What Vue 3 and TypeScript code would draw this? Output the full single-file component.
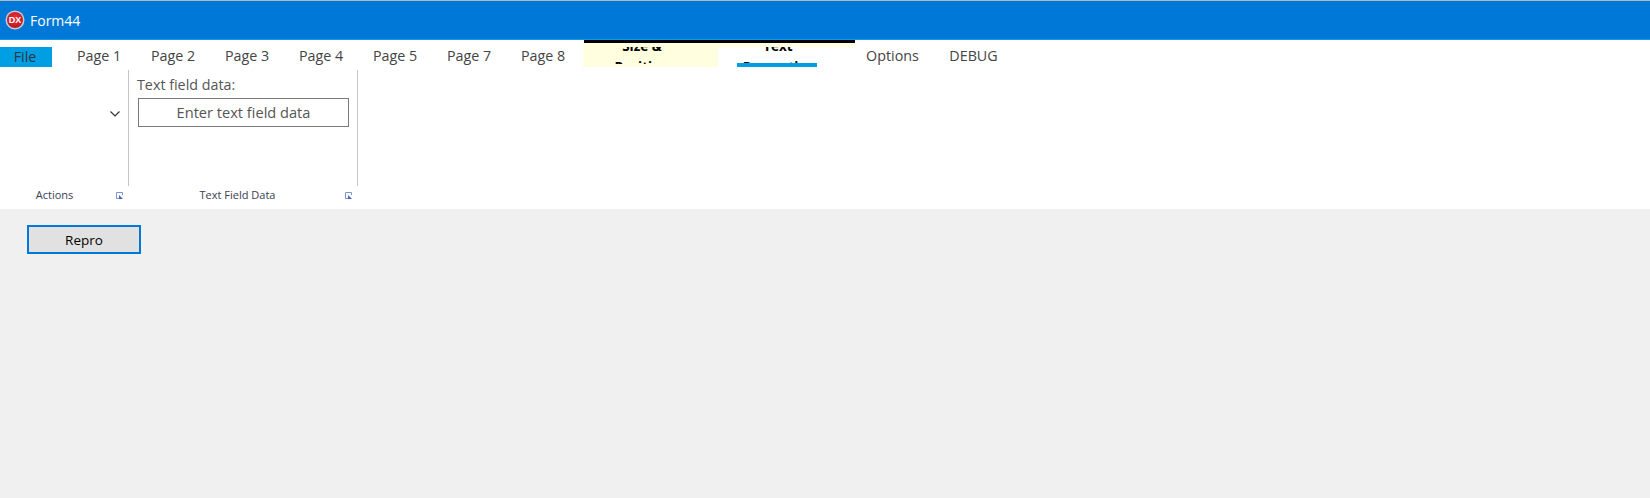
<script setup lang="ts">
const pages: string[] = ['Page 1', 'Page 2', 'Page 3', 'Page 4', 'Page 5', 'Page 7', 'Page 8']
</script>

<template>
  <div class="form">
    <header class="titlebar">
      <svg class="logo" width="20" height="20" viewBox="0 0 20 20">
        <defs>
          <radialGradient id="ball" cx="50%" cy="40%" r="60%">
            <stop offset="0%" stop-color="#f0323c" />
            <stop offset="100%" stop-color="#b81822" />
          </radialGradient>
        </defs>
        <circle cx="10" cy="10" r="9.5" fill="#c9cdd2" />
        <circle cx="10" cy="10" r="8" fill="url(#ball)" />
        <text x="10" y="13" text-anchor="middle" class="logo-text">DX</text>
      </svg>
      <span class="title">Form44</span>
    </header>

    <nav class="tabs">
      <div class="tab-file">File</div>
      <div v-for="page in pages" :key="page" class="tab">{{ page }}</div>
      <div class="context">
        <div class="ctx-tab ctx-size">
          <div class="ctx-label">Size &amp;<br />Position</div>
        </div>
        <div class="ctx-tab ctx-text">
          <div class="ctx-label">Text<br />Properties</div>
          <div class="active-bar"></div>
        </div>
      </div>
      <div class="tab tab-options">Options</div>
      <div class="tab tab-debug">DEBUG</div>
    </nav>

    <section class="ribbon">
      <div class="group group-actions">
        <div class="group-body">
          <svg class="chevron" width="10" height="6" viewBox="0 0 10 6">
            <path d="M0.5 0.5 L5 5 L9.5 0.5" fill="none" stroke="#333" stroke-width="1.2" />
          </svg>
        </div>
        <div class="caption">
          <span>Actions</span>
          <svg class="launcher" width="7" height="7" viewBox="0 0 7 7">
            <path d="M6.5 3 V0.5 H0.5 V6.5 H3" fill="none" stroke="#7d95cf" stroke-width="1" />
            <path d="M3 3 L7 7 H3 Z" fill="#3f66c4" />
          </svg>
        </div>
      </div>
      <div class="group group-text">
        <div class="group-body">
          <label class="field-label">Text field data:</label>
          <div class="field">Enter text field data</div>
        </div>
        <div class="caption">
          <span>Text Field Data</span>
          <svg class="launcher" width="7" height="7" viewBox="0 0 7 7">
            <path d="M6.5 3 V0.5 H0.5 V6.5 H3" fill="none" stroke="#7d95cf" stroke-width="1" />
            <path d="M3 3 L7 7 H3 Z" fill="#3f66c4" />
          </svg>
        </div>
      </div>
    </section>

    <main class="content">
      <button class="repro">Repro</button>
    </main>
  </div>
</template>

<style>
html, body {
  margin: 0;
  background: #f0f0f0;
}
</style>

<style scoped>
.form {
  width: 1650px;
  height: 498px;
  display: flex;
  flex-direction: column;
  overflow: hidden;
  font-family: "Open Sans", "Noto Sans", sans-serif;
  background: #f0f0f0;
}

.titlebar {
  height: 39px;
  box-sizing: border-box;
  border-top: 1px solid #b4b9bf;
  background: #0078d7;
  color: #fff;
  display: flex;
  align-items: center;
  padding-left: 5px;
  gap: 5px;
}

.logo {
  flex: none;
}

.logo-text {
  font-family: "Liberation Sans", sans-serif;
  font-size: 9px;
  font-weight: 700;
  fill: #fff;
}

.title {
  font-size: 14px;
}

.tabs {
  height: 28px;
  background: #fff;
  display: flex;
  font-size: 14.3px;
  color: #444;
  border-top: 1px solid #0f9be6;
  box-sizing: border-box;
}

.tab-file {
  width: 50px;
  height: 20px;
  margin-top: 7px;
  margin-right: 10px;
  padding-right: 2px;
  background: #009fe3;
  color: #2a3540;
  text-align: center;
  line-height: 20px;
}

.tab {
  width: 74px;
  text-align: center;
  line-height: 31px;
}

.context {
  margin-left: 4px;
  display: flex;
  width: 271px;
  border-top: 3px solid #000;
  height: 24px;
}

.ctx-tab {
  position: relative;
  height: 24px;
  font-weight: 700;
  color: #000;
  text-align: center;
}

.ctx-size {
  width: 135px;
  margin-left: -1px;
  background: #ffffe0;
}

.ctx-text {
  width: 137px;
  background: linear-gradient(#ffffe0 4px, #fff 4px);
}

.ctx-label {
  position: absolute;
  left: 0;
  right: 17px;
  top: 4px;
  height: 20px;
  overflow: hidden;
  clip-path: inset(0 0 3px 0);
  display: flex;
  flex-direction: column;
  justify-content: center;
  font-size: 13.5px;
  line-height: 21px;
  box-sizing: border-box;
}

.active-bar {
  position: absolute;
  left: 19px;
  width: 80px;
  top: 20px;
  height: 4px;
  background: #009fe3;
}

.tab-options {
  width: 75px;
}

.tab-debug {
  width: 87px;
}

.ribbon {
  height: 142px;
  background: #fff;
  display: flex;
  color: #555;
}

.group {
  display: flex;
  flex-direction: column;
}

.group-actions {
  width: 129px;
}

.group-text {
  width: 229px;
}

.group-body {
  box-sizing: border-box;
  height: 116px;
  margin-top: 3px;
  border-right: 1px solid #c6c6c6;
  position: relative;
  padding-left: 8px;
}

.chevron {
  position: absolute;
  left: 110px;
  top: 41px;
}

.field-label {
  display: block;
  font-size: 14.3px;
  line-height: 19px;
  margin-top: 5px;
}

.field {
  box-sizing: border-box;
  width: 211px;
  height: 29px;
  margin: 4px 0 0 1px;
  border: 1px solid #7a7a7a;
  text-align: center;
  font-size: 14.6px;
  line-height: 27px;
  color: #555;
}

.caption {
  position: relative;
  flex: 1;
  font-size: 11px;
  color: #3a4050;
  text-align: center;
  line-height: 16px;
  padding-right: 12px;
  padding-top: 1px;
}

.group-actions .caption {
  padding-right: 20px;
}

.launcher {
  position: absolute;
  right: 6px;
  top: 6px;
}

.content {
  flex: 1;
  padding: 16px 0 0 27px;
}

.repro {
  display: block;
  width: 114px;
  height: 29px;
  box-sizing: border-box;
  border: 2px solid #0078d7;
  background: #e1e1e1;
  color: #000;
  font-family: inherit;
  font-size: 13.5px;
  padding: 0;
}
</style>
